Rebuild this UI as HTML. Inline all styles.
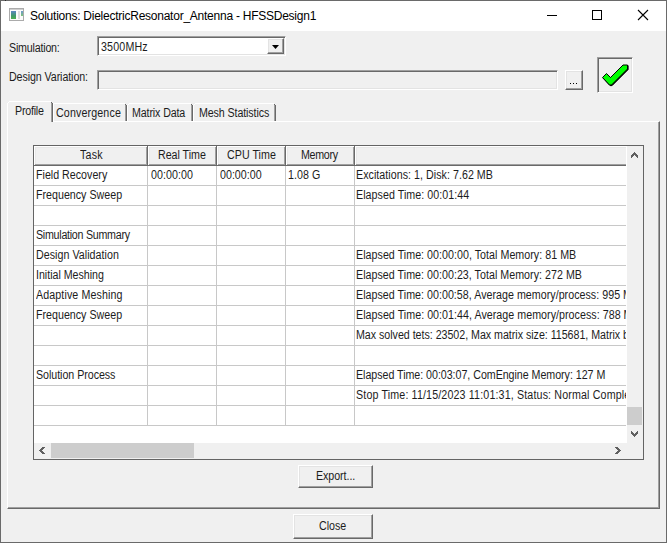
<!DOCTYPE html>
<html><head><meta charset="utf-8">
<style>
*{margin:0;padding:0;box-sizing:border-box}
html,body{width:667px;height:543px;overflow:hidden;background:#f0f0f0}
body{position:relative;font-family:"Liberation Sans",sans-serif;font-size:11px;color:#000}
.a{position:absolute}
.tx{position:absolute;white-space:nowrap;font-size:12.0px;line-height:16px;transform:scaleX(0.89);transform-origin:0 0;color:#1c1c1c}
.raised{background:#f0f0f0;border-style:solid;border-width:1px;border-color:#fff #696969 #696969 #fff;box-shadow:inset -1px -1px 0 #a0a0a0, inset 1px 1px 0 #e3e3e3}
.sunken{border-style:solid;border-width:1px;border-color:#a0a0a0 #fff #fff #a0a0a0;box-shadow:inset 1px 1px 0 #696969, inset -1px -1px 0 #e3e3e3}
.tab{position:absolute;background:#f0f0f0;border-style:solid;border-width:1px 1px 0 1px;border-color:#fff #696969 #fff #fff;box-shadow:inset -1px 0 0 #a0a0a0}
.hd{background:#f0f0f0;box-shadow:inset -1px -1px 0 #696969, inset 1px 1px 0 #fff, inset -2px -2px 0 #a0a0a0, inset 2px 2px 0 #e8e8e8}
.hd.last{box-shadow:inset 0 -1px 0 #696969, inset 1px 1px 0 #fff, inset 0 -2px 0 #a0a0a0, inset 2px 2px 0 #e8e8e8}
.hl,.vl{background:#c8c8c8}
</style></head><body>
<div class="a" style="left:0;top:0;width:667px;height:543px;border:1px solid #6a6a6a"></div>
<div class="a" style="left:5px;top:0;width:1px;height:1px;background:#2a2a2a"></div>
<div class="a" style="left:1px;top:1px;width:665px;height:30px;background:#fff"></div>
<div class="a" style="left:9px;top:8px;width:15px;height:13px;border:1px solid #ababab;background:#fcfcfc"></div>
<div class="a" style="left:10px;top:9px;width:13px;height:1px;background:#cfcfcf"></div>
<div class="a" style="left:11px;top:11px;width:5px;height:8px;background:linear-gradient(#5d86c4,#3f9a6a 60%,#4caf50)"></div>
<div class="a" style="left:18px;top:11px;width:2px;height:8px;background:#dedede"></div>
<div class="a" style="left:21px;top:11px;width:2px;height:5px;background:linear-gradient(#6e98d0,#7cc47a)"></div>
<div class="a" style="left:30px;top:9px;font-size:12px;letter-spacing:-0.245px;line-height:14px;white-space:nowrap">Solutions: DielectricResonator_Antenna - HFSSDesign1</div>
<div class="a" style="left:547px;top:15px;width:10px;height:1px;background:#000"></div>
<div class="a" style="left:592px;top:10px;width:10px;height:10px;border:1px solid #000"></div>
<svg class="a" style="left:637px;top:9px" width="12" height="12" viewBox="0 0 12 12"><path d="M1 1L11 11M11 1L1 11" stroke="#000" stroke-width="1.1" fill="none"/></svg>

<div class="tx" style="left:9.0px;top:40px;letter-spacing:-0.225px">Simulation:</div>
<div class="a sunken" style="left:97px;top:36px;width:189px;height:20px;background:#fff"></div>
<div class="tx" style="left:101.0px;top:39px;letter-spacing:0.187px">3500MHz</div>
<div class="a raised" style="left:267px;top:38px;width:17px;height:16px"></div>
<svg class="a" style="left:272px;top:45px" width="7" height="4" viewBox="0 0 7 4"><path d="M0 0H7L3.5 4Z" fill="#000"/></svg>

<div class="tx" style="left:9.0px;top:69px;letter-spacing:-0.105px">Design Variation:</div>
<div class="a sunken" style="left:97px;top:70px;width:461px;height:20px;background:#f0f0f0"></div>
<div class="a raised" style="left:565px;top:70px;width:18px;height:20px"></div>
<div class="a" style="left:570px;top:83px;width:1px;height:1px;background:#000"></div>
<div class="a" style="left:573px;top:83px;width:1px;height:1px;background:#000"></div>
<div class="a" style="left:576px;top:83px;width:1px;height:1px;background:#000"></div>
<div class="a sunken" style="left:597px;top:57px;width:36px;height:36px;background:#f0f0f0"></div>
<svg class="a" style="left:600px;top:62px" width="32" height="28" viewBox="600 62 32 28">
<path transform="translate(0.6 0.6)" d="M602.5 77.5L606.5 73.5L610.5 77.5L623 65H627.5V69L611.5 85H609.5Z" fill="#000" stroke="#000" stroke-width="1"/>
<path d="M602.5 77.5L606.5 73.5L610.5 77.5L623 65H627.5V69L611.5 85H609.5Z" fill="#00ff00" stroke="#000" stroke-width="1"/>
</svg>

<div class="a" style="left:7px;top:121px;width:653px;height:388px;border-style:solid;border-width:1px;border-color:#fff #696969 #696969 #fff;box-shadow:inset -1px -1px 0 #a0a0a0"></div>
<div class="a" style="left:53px;top:103px;width:74px;height:18px;background:#f0f0f0"></div>
<div class="a" style="left:53px;top:103px;width:72px;height:1px;background:#fff"></div>
<div class="a" style="left:53px;top:104px;width:1px;height:17px;background:#fff"></div>
<div class="a" style="left:125px;top:104px;width:1px;height:1px;background:#696969"></div>
<div class="a" style="left:126px;top:105px;width:1px;height:16px;background:#696969"></div>
<div class="a" style="left:125px;top:105px;width:1px;height:16px;background:#a0a0a0"></div>
<div class="tx" style="left:55.7px;top:105px;letter-spacing:0.146px">Convergence</div>
<div class="a" style="left:127px;top:103px;width:66px;height:18px;background:#f0f0f0"></div>
<div class="a" style="left:129px;top:103px;width:62px;height:1px;background:#fff"></div>
<div class="a" style="left:128px;top:104px;width:1px;height:1px;background:#fff"></div>
<div class="a" style="left:127px;top:105px;width:1px;height:16px;background:#fff"></div>
<div class="a" style="left:191px;top:104px;width:1px;height:1px;background:#696969"></div>
<div class="a" style="left:192px;top:105px;width:1px;height:16px;background:#696969"></div>
<div class="a" style="left:191px;top:105px;width:1px;height:16px;background:#a0a0a0"></div>
<div class="tx" style="left:132.3px;top:105px;letter-spacing:-0.146px">Matrix Data</div>
<div class="a" style="left:193px;top:103px;width:83px;height:18px;background:#f0f0f0"></div>
<div class="a" style="left:195px;top:103px;width:79px;height:1px;background:#fff"></div>
<div class="a" style="left:194px;top:104px;width:1px;height:1px;background:#fff"></div>
<div class="a" style="left:193px;top:105px;width:1px;height:16px;background:#fff"></div>
<div class="a" style="left:274px;top:104px;width:1px;height:1px;background:#696969"></div>
<div class="a" style="left:275px;top:105px;width:1px;height:16px;background:#696969"></div>
<div class="a" style="left:274px;top:105px;width:1px;height:16px;background:#a0a0a0"></div>
<div class="tx" style="left:198.6px;top:105px;letter-spacing:-0.128px">Mesh Statistics</div>
<div class="a" style="left:7px;top:101px;width:46px;height:21px;background:#f0f0f0"></div>
<div class="a" style="left:9px;top:101px;width:42px;height:1px;background:#fff"></div>
<div class="a" style="left:8px;top:102px;width:1px;height:1px;background:#fff"></div>
<div class="a" style="left:7px;top:103px;width:1px;height:19px;background:#fff"></div>
<div class="a" style="left:51px;top:102px;width:1px;height:1px;background:#696969"></div>
<div class="a" style="left:52px;top:103px;width:1px;height:19px;background:#696969"></div>
<div class="a" style="left:51px;top:103px;width:1px;height:19px;background:#a0a0a0"></div>
<div class="tx" style="left:15.0px;top:103px;letter-spacing:-0.262px">Profile</div>

<div class="a" style="left:33px;top:145px;width:611px;height:315px;border:1px solid #646464;background:#fff;overflow:hidden">
<div class="a hd" style="left:0px;top:0px;width:114px;height:20px;"></div>
<div class="a hd" style="left:114px;top:0px;width:69px;height:20px;"></div>
<div class="a hd" style="left:183px;top:0px;width:69px;height:20px;"></div>
<div class="a hd" style="left:252px;top:0px;width:69px;height:20px;"></div>
<div class="a hd last" style="left:321px;top:0px;width:271px;height:20px;"></div>
<div class="a hl" style="left:0px;top:39px;width:592px;height:1px;"></div>
<div class="a hl" style="left:0px;top:59px;width:592px;height:1px;"></div>
<div class="a hl" style="left:0px;top:79px;width:592px;height:1px;"></div>
<div class="a hl" style="left:0px;top:99px;width:592px;height:1px;"></div>
<div class="a hl" style="left:0px;top:119px;width:592px;height:1px;"></div>
<div class="a hl" style="left:0px;top:139px;width:592px;height:1px;"></div>
<div class="a hl" style="left:0px;top:159px;width:592px;height:1px;"></div>
<div class="a hl" style="left:0px;top:179px;width:592px;height:1px;"></div>
<div class="a hl" style="left:0px;top:199px;width:592px;height:1px;"></div>
<div class="a hl" style="left:0px;top:219px;width:592px;height:1px;"></div>
<div class="a hl" style="left:0px;top:239px;width:592px;height:1px;"></div>
<div class="a hl" style="left:0px;top:259px;width:592px;height:1px;"></div>
<div class="a hl" style="left:0px;top:279px;width:592px;height:1px;"></div>
<div class="a vl" style="left:113px;top:20px;width:1px;height:260px;"></div>
<div class="a vl" style="left:182px;top:20px;width:1px;height:260px;"></div>
<div class="a vl" style="left:251px;top:20px;width:1px;height:260px;"></div>
<div class="a vl" style="left:320px;top:20px;width:1px;height:260px;"></div>
<div class="tx" style="left:46.0px;top:1px;letter-spacing:0.225px">Task</div>
<div class="tx" style="left:123.69999999999999px;top:1px;letter-spacing:-0.028px">Real Time</div>
<div class="tx" style="left:192.8px;top:1px;letter-spacing:0.032px">CPU Time</div>
<div class="tx" style="left:266.5px;top:1px;letter-spacing:-0.337px">Memory</div>
<div class="a" style="left:0;top:20px;width:592px;height:276px;overflow:hidden">
<div class="tx" style="left:67.0px;top:-127px;letter-spacing:0.187px">3500MHz</div>
<div class="tx" style="left:284.5px;top:352px;letter-spacing:-0.056px">Close</div>
<div class="tx" style="left:2.0px;top:1px;letter-spacing:0.0px">Field Recovery</div>
<div class="tx" style="left:116.6px;top:1px;letter-spacing:0.064px">00:00:00</div>
<div class="tx" style="left:186.2px;top:1px;letter-spacing:0.0px">00:00:00</div>
<div class="tx" style="left:254.10000000000002px;top:1px;letter-spacing:0.067px">1.08 G</div>
<div class="tx" style="left:322.0px;top:1px;letter-spacing:0.04px">Excitations: 1, Disk: 7.62 MB</div>
<div class="tx" style="left:1.7000000000000028px;top:21px;letter-spacing:0.0px">Frequency Sweep</div>
<div class="tx" style="left:322.0px;top:21px;letter-spacing:0.054px">Elapsed Time: 00:01:44</div>
<div class="tx" style="left:1.5px;top:61px;letter-spacing:-0.297px">Simulation Summary</div>
<div class="tx" style="left:1.5px;top:81px;letter-spacing:0.035px">Design Validation</div>
<div class="tx" style="left:322.0px;top:81px;letter-spacing:0.037px">Elapsed Time: 00:00:00, Total Memory: 81 MB</div>
<div class="tx" style="left:1.5px;top:101px;letter-spacing:-0.024px">Initial Meshing</div>
<div class="tx" style="left:322.0px;top:101px;letter-spacing:0.031px">Elapsed Time: 00:00:23, Total Memory: 272 MB</div>
<div class="tx" style="left:1.7000000000000028px;top:121px;letter-spacing:0.12px">Adaptive Meshing</div>
<div class="tx" style="left:322.0px;top:121px;letter-spacing:0.029px">Elapsed Time: 00:00:58, Average memory/process: 995 MB</div>
<div class="tx" style="left:1.7000000000000028px;top:141px;letter-spacing:0.0px">Frequency Sweep</div>
<div class="tx" style="left:322.0px;top:141px;letter-spacing:0.04px">Elapsed Time: 00:01:44, Average memory/process: 788 MB</div>
<div class="tx" style="left:322.0px;top:161px;letter-spacing:-0.033px">Max solved tets: 23502, Max matrix size: 115681, Matrix bandwidth: 16.8</div>
<div class="tx" style="left:1.7000000000000028px;top:201px;letter-spacing:-0.052px">Solution Process</div>
<div class="tx" style="left:322.0px;top:201px;letter-spacing:-0.044px">Elapsed Time: 00:03:07, ComEngine Memory: 127 M</div>
<div class="tx" style="left:322.0px;top:221px;letter-spacing:0.162px">Stop Time: 11/15/2023 11:01:31, Status: Normal Completion</div>
</div>
<div class="a" style="left:593px;top:0px;width:16px;height:297px;background:#f0f0f0"></div>
<div class="a" style="left:593px;top:261px;width:15px;height:18px;background:#cdcdcd"></div>
<div class="a" style="left:0px;top:297px;width:593px;height:16px;background:#f0f0f0"></div>
<div class="a" style="left:17px;top:297px;width:143px;height:15px;background:#cdcdcd"></div>
<div class="a" style="left:593px;top:297px;width:16px;height:16px;background:#f0f0f0"></div>
<svg class="a" style="left:597px;top:6px" width="7" height="6" shape-rendering="crispEdges" fill="#606060"><rect x="3" y="0" width="1" height="1"/><rect x="2" y="1" width="3" height="1"/><rect x="1" y="2" width="5" height="1"/><rect x="0" y="3" width="3" height="1"/><rect x="4" y="3" width="3" height="1"/><rect x="0" y="4" width="2" height="1"/><rect x="5" y="4" width="2" height="1"/><rect x="0" y="5" width="1" height="1"/><rect x="6" y="5" width="1" height="1"/></svg>
<svg class="a" style="left:597px;top:285px" width="7" height="6" shape-rendering="crispEdges" fill="#606060"><rect x="0" y="0" width="1" height="1"/><rect x="6" y="0" width="1" height="1"/><rect x="0" y="1" width="2" height="1"/><rect x="5" y="1" width="2" height="1"/><rect x="0" y="2" width="3" height="1"/><rect x="4" y="2" width="3" height="1"/><rect x="1" y="3" width="5" height="1"/><rect x="2" y="4" width="3" height="1"/><rect x="3" y="5" width="1" height="1"/></svg>
<svg class="a" style="left:5px;top:301px" width="6" height="7" shape-rendering="crispEdges" fill="#606060"><rect x="3" y="0" width="3" height="1"/><rect x="2" y="1" width="3" height="1"/><rect x="1" y="2" width="3" height="1"/><rect x="0" y="3" width="3" height="1"/><rect x="1" y="4" width="3" height="1"/><rect x="2" y="5" width="3" height="1"/><rect x="3" y="6" width="3" height="1"/></svg>
<svg class="a" style="left:581px;top:301px" width="6" height="7" shape-rendering="crispEdges" fill="#606060"><rect x="0" y="0" width="3" height="1"/><rect x="1" y="1" width="3" height="1"/><rect x="2" y="2" width="3" height="1"/><rect x="3" y="3" width="3" height="1"/><rect x="2" y="4" width="3" height="1"/><rect x="1" y="5" width="3" height="1"/><rect x="0" y="6" width="3" height="1"/></svg>
</div>

<div class="a raised" style="left:298px;top:465px;width:75px;height:23px"></div>
<div class="tx" style="left:316.1px;top:468px;letter-spacing:-0.072px">Export...</div>
<div class="a raised" style="left:293px;top:514px;width:80px;height:25px"></div>
<div class="tx" style="left:318.5px;top:518px;letter-spacing:-0.056px">Close</div>
</body></html>
